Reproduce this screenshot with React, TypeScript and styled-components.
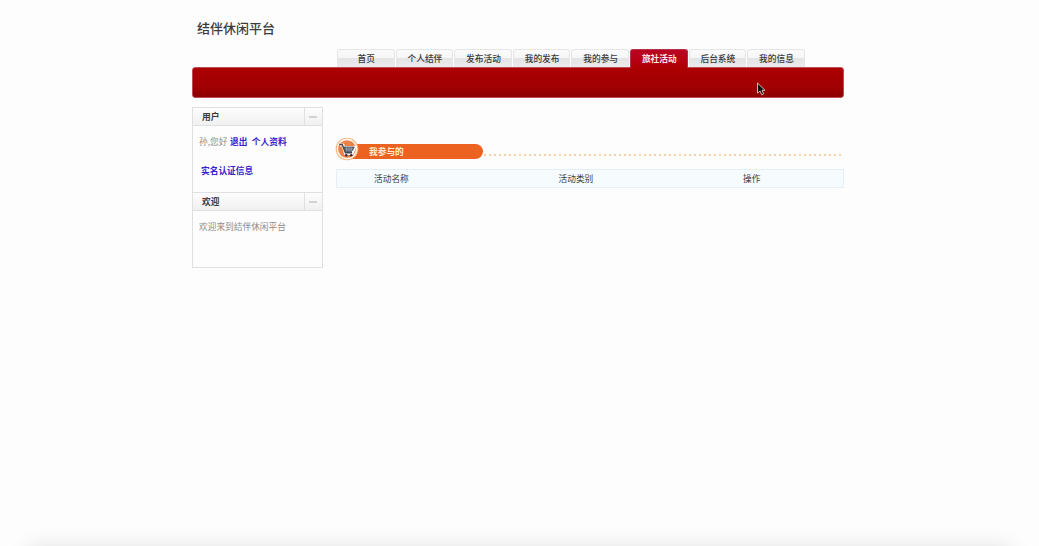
import React from "react";
import styled, { createGlobalStyle } from "styled-components";

const GlobalStyle = createGlobalStyle`
  * { box-sizing: border-box; }
  body {
    margin: 0;
    background: #fdfdfd;
    font-family: "Noto Sans CJK SC", sans-serif;
    font-size: 8.7px;
    color: #3a3a3a;
    overflow: hidden;
  }
`;

const Page = styled.div`
  position: relative;
  display: flex;
  flex-direction: column;
  height: 546px;
  padding-left: 192px;
  overflow: hidden;
`;

const Title = styled.h1`
  margin: 0;
  padding: 18px 0 0 5px;
  height: 49px;
  font-size: 13px;
  line-height: 20px;
  font-weight: 500;
  color: #3c3c3c;
`;

const Tabs = styled.nav`
  display: flex;
  gap: 1px;
  height: 18px;
  padding-left: 145px;
`;

const Tab = styled.a<{ $active?: boolean }>`
  position: relative;
  width: 57.6px;
  height: ${(p) => (p.$active ? 19 : 18)}px;
  line-height: 18px;
  padding-left: 1px;
  text-align: center;
  font-weight: ${(p) => (p.$active ? 700 : 500)};
  color: ${(p) => (p.$active ? "#ffe3e7" : "#3a3a3a")};
  border: 1px solid ${(p) => (p.$active ? "#b5324a" : "#e6e6e6")};
  border-bottom: 0;
  border-radius: 3px 3px 0 0;
  background: ${(p) =>
    p.$active
      ? "linear-gradient(#ba0524, #b60012 60%, #ac0003)"
      : "linear-gradient(#fbfbfb 0, #f6f6f6 47%, #e4e4e4 50%, #ebebeb 100%)"};
`;

const Banner = styled.div`
  width: 652px;
  height: 31px;
  border: 1px solid #bd4c57;
  border-radius: 3px;
  background: linear-gradient(#ac0003 0, #a10002 65%, #8c0003 100%);
`;

const Columns = styled.div`
  display: flex;
  gap: 13.5px;
  width: 652px;
  padding-top: 9px;
`;

const Sidebar = styled.aside`
  width: 130.5px;
  height: 161px;
  border: 1px solid #e0e0e0;
`;

const PanelHead = styled.div`
  display: flex;
  height: 18px;
  line-height: 17px;
  border-bottom: 1px solid #e0e0e0;
  background: linear-gradient(#fdfdfd, #f0f0f0);
  font-weight: 700;
`;

const PanelName = styled.span`
  flex: 1;
  padding-left: 9px;
`;

const Collapse = styled.span`
  display: flex;
  align-items: center;
  justify-content: center;
  width: 18px;
  border-left: 1px solid #e0e0e0;

  &::before {
    content: "";
    width: 8px;
    height: 2px;
    background: #d2d2d2;
  }
`;

const PanelBody = styled.div<{ $height: number; $divided?: boolean }>`
  height: ${(p) => p.$height}px;
  padding: 9px 0 0 6px;
  color: #8c8c8c;
  border-bottom: ${(p) => (p.$divided ? "1px solid #e0e0e0" : "0")};
`;

const Line = styled.div`
  line-height: 14px;
  margin-bottom: 15px;
  white-space: pre;
`;

const TextLink = styled.a<{ $gap: number }>`
  margin-left: ${(p) => p.$gap}px;
  font-weight: 700;
  color: #3722cc;
`;

const Main = styled.main`
  flex: 1;
  padding-top: 31px;
`;

const Heading = styled.div`
  display: flex;
  align-items: flex-start;
  height: 31px;
`;

const CartBadge = styled.svg`
  width: 24px;
  height: 24px;
  margin: -1px -13.5px 0 -1px;
  z-index: 1;
`;

const Pill = styled.h2`
  width: 137.5px;
  height: 15px;
  margin: 6px 0 0;
  padding-left: 23.5px;
  border-radius: 0 8px 8px 0;
  background: #ec6321;
  color: #ffead9;
  font-size: 8.7px;
  line-height: 15px;
  font-weight: 700;
`;

const Dots = styled.div`
  flex: 1;
  height: 2px;
  margin-top: 16px;
  background: radial-gradient(circle at 2px 1px, #f5d2a6 0.9px, transparent 1.4px) 0 0 / 5px 2px round;
`;

const TableHead = styled.div`
  display: grid;
  grid-template-columns: 184.5px 184.5px 1fr;
  height: 19px;
  padding-left: 37px;
  line-height: 17px;
  border: 1px solid #e5eff7;
  background: #f6fbfe;
`;

const Cursor = styled.svg`
  position: absolute;
  left: 756px;
  top: 82px;
  width: 10px;
  height: 14px;
`;

const BottomShade = styled.div`
  position: absolute;
  left: 30px;
  right: 30px;
  top: 549px;
  height: 20px;
  box-shadow: 0 0 22px 2px rgba(0, 0, 0, 0.11);
`;

const tabs = ["首页", "个人结伴", "发布活动", "我的发布", "我的参与", "旅社活动", "后台系统", "我的信息"];
const fields = ["活动名称", "活动类别", "操作"];

export default function App() {
  return (
    <Page>
      <GlobalStyle />
      <Title>结伴休闲平台</Title>
      <Tabs>
        {tabs.map((name) => (
          <Tab key={name} $active={name === "旅社活动"}>{name}</Tab>
        ))}
      </Tabs>
      <Banner />
      <Columns>
        <Sidebar>
          <PanelHead>
            <PanelName>用户</PanelName>
            <Collapse />
          </PanelHead>
          <PanelBody $height={67} $divided>
            <Line>
              孙,您好
              <TextLink $gap={2.5}>退出</TextLink>
              <TextLink $gap={4.5}>个人资料</TextLink>
            </Line>
            <Line>
              <TextLink $gap={2}>实名认证信息</TextLink>
            </Line>
          </PanelBody>
          <PanelHead>
            <PanelName>欢迎</PanelName>
            <Collapse />
          </PanelHead>
          <PanelBody $height={56}>
            <Line>欢迎来到结伴休闲平台</Line>
          </PanelBody>
        </Sidebar>
        <Main>
          <Heading>
            <CartBadge viewBox="0 0 24 24">
              <circle cx="12" cy="12" r="11.3" fill="#f3b27c" />
              <circle cx="12" cy="12" r="10.4" fill="#fff3e6" />
              <circle cx="12" cy="12" r="8.8" fill="#ec8245" />
              <path d="M5 8 L8 8 L10.5 16.5 H17 L20 9" fill="#fff" stroke="#fff" strokeWidth="3" strokeLinejoin="round" />
              <path d="M4.2 7.5 H7.2 L10.4 15.8 H17" fill="none" stroke="#3f4654" strokeWidth="1.4" />
              <path d="M8.6 10 H19.3 L16.8 14.4 H10.3Z" fill="#68717e" stroke="#3f4654" strokeWidth="0.8" />
              <path d="M11.6 10.4v3.4M14 10.4v3.4M16.2 10.4v3.4" stroke="#c9ced6" strokeWidth="0.6" />
              <circle cx="11.3" cy="18.2" r="1.3" fill="#30343d" />
              <circle cx="16.2" cy="18.2" r="1.3" fill="#30343d" />
            </CartBadge>
            <Pill>我参与的</Pill>
            <Dots />
          </Heading>
          <TableHead>
            {fields.map((name) => (
              <span key={name}>{name}</span>
            ))}
          </TableHead>
        </Main>
      </Columns>
      <Cursor viewBox="0 0 10 14">
        <path d="M1.5 1 V11.2 L4 9 L5.6 12.7 L7.6 11.8 L6 8.3 H9Z" fill="#111" stroke="#e5c9cb" strokeWidth="0.9" />
      </Cursor>
      <BottomShade />
    </Page>
  );
}
